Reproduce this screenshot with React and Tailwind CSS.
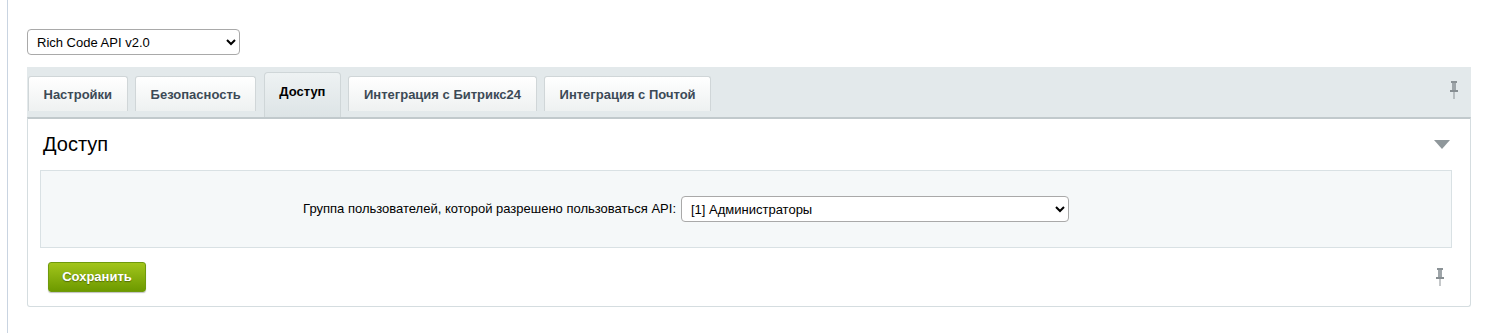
import React, { useState } from 'react';

const tabs = [
  { id: 'settings', label: 'Настройки' },
  { id: 'security', label: 'Безопасность' },
  { id: 'access', label: 'Доступ' },
  { id: 'b24', label: 'Интеграция с Битрикс24' },
  { id: 'mail', label: 'Интеграция с Почтой' },
];

const Pin = ({ className }) => (
  <svg className={className} width="10" height="18" viewBox="0 0 10 18">
    <rect x="2" y="0" width="6" height="2" fill="#8b9296" />
    <rect x="3" y="2" width="4" height="7" fill="#9ea5a9" />
    <rect x="1" y="9" width="8" height="2" fill="#878e92" />
    <rect x="4.5" y="11" width="1" height="7" fill="#8b9296" />
  </svg>
);

const App = () => {
  const [active, setActive] = useState('access');
  const [module, setModule] = useState('richcode');
  const [group, setGroup] = useState('1');

  return (
    <div className="flex h-[333px] w-full bg-white font-['Liberation_Sans',Arial,sans-serif] text-[13px] text-black">
      <div className="w-[7px] shrink-0" />
      <div className="flex-1 border-l border-[#c9d4e1] pl-[19px] pr-[16px] pt-[29px]">
        <select
          value={module}
          onChange={(e) => setModule(e.target.value)}
          className="h-[26px] w-[213px] rounded-[4px] border border-[#a9a9a9] bg-white pl-[5px] text-[13px] text-black"
        >
          <option value="richcode">Rich Code API v2.0</option>
        </select>

        {/* tab strip */}
        <div className="mt-[12px] flex h-[50px] items-end justify-between bg-[#e3e9eb] pl-px">
          <div className="flex items-end gap-[7.5px]">
            {tabs.map((t) =>
              t.id === active ? (
                <button
                  key={t.id}
                  onClick={() => setActive(t.id)}
                  className="h-[45px] rounded-t-[4px] border border-b-0 border-[#cfd6d8] bg-gradient-to-b from-[#eef2f3] to-[#dde4e6] px-[14.5px] pb-[7px] text-[13px] font-bold text-black"
                >
                  {t.label}
                </button>
              ) : (
                <button
                  key={t.id}
                  onClick={() => setActive(t.id)}
                  className="mb-[6px] h-[35px] rounded-t-[3px] border border-b-0 border-[#d0d6d8] bg-gradient-to-b from-white to-[#eef1f1] px-[14.5px] pt-[1px] text-[13px] font-bold text-[#3c4a56]"
                >
                  {t.label}
                </button>
              )
            )}
          </div>
          <Pin className="mb-[18px] mr-[12px]" />
        </div>

        {/* panel */}
        <div className="rounded-b-[3px] border border-t-2 border-[#d5dde0] border-t-[#c1c9cc] bg-white pb-[14px]">
          <div className="flex items-center justify-between pl-[15px] pr-[20px] pt-[13px]">
            <h2 className="text-[20px] font-normal leading-[24px] text-black">Доступ</h2>
            <svg width="16" height="9" viewBox="0 0 16 9">
              <polygon points="0,0 16,0 8,9" fill="#8f979b" />
            </svg>
          </div>

          <div className="ml-[12px] mr-[18px] mt-[14px] flex h-[78px] items-center border border-[#d9e1e4] bg-[#f5f8f9]">
            <label htmlFor="group" className="w-[640px] pr-[5px] text-right text-[13px] text-black">
              Группа пользователей, которой разрешено пользоваться API:
            </label>
            <select
              id="group"
              value={group}
              onChange={(e) => setGroup(e.target.value)}
              className="h-[26px] w-[388px] rounded-[4px] border border-[#a9a9a9] bg-white pl-[5px] text-[13px] text-black"
            >
              <option value="1">[1] Администраторы</option>
            </select>
          </div>

          <div className="mt-[14px] flex items-center justify-between pl-[20px] pr-[25px]">
            <button className="h-[30px] w-[98px] rounded-[3px] border border-[#6f9a0c] bg-gradient-to-b from-[#a2c51a] to-[#6d9a00] text-[13px] font-bold text-white shadow-[0_1px_1px_rgba(0,0,0,0.25)] [text-shadow:0_1px_1px_rgba(0,0,0,0.35)]">
              Сохранить
            </button>
            <Pin />
          </div>
        </div>
      </div>
    </div>
  );
};

export default App;
